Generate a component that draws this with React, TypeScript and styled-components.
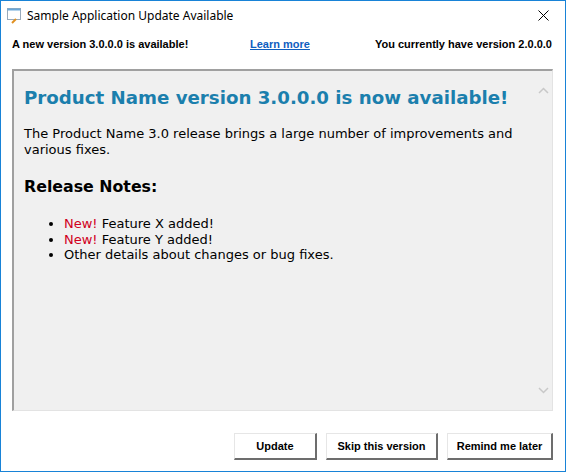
import React from "react";
import styled, { createGlobalStyle } from "styled-components";

const Global = createGlobalStyle`
  html, body { margin: 0; padding: 0; background: #fff; }
  body { font-family: "Liberation Sans", Arial, sans-serif; }
`;

const Window = styled.div`
  width: 566px; height: 472px; box-sizing: border-box;
  border: 1px solid #1883d7; background: #fff;
  display: flex; flex-direction: column;
`;
const TitleBar = styled.div`
  height: 29px; display: flex; align-items: center; padding: 0 0 0 6px;
  font-family: "Segoe UI", "Noto Sans", sans-serif; font-size: 12px; color: #000;
`;
const TitleText = styled.span` flex: 1; margin-left: 4px; `;
const Close = styled.div`
  width: 44px; height: 29px; display: flex; align-items: center; justify-content: center;
`;
const InfoRow = styled.div`
  display: flex; align-items: center;
  padding: 6px 13px 0 11px; height: 16px;
  font-size: 11px; font-weight: bold;
`;
const InfoLeft = styled.span` width: 238px; `;
const InfoRight = styled.span` margin-left: auto; `;
const Link = styled.span`
  color: #0f5ebf; text-decoration: underline;
`;
const Panel = styled.div`
  margin: 17px 12px 0 11px; height: 342px; box-sizing: border-box;
  background: #f0f0f0;
  border-top: 2px solid #a0a0a0; border-left: 2px solid #a0a0a0;
  border-right: 1px solid #e3e3e3; border-bottom: 1px solid #e3e3e3;
  display: flex;
`;
const Content = styled.div`
  flex: 1; padding: 15px 0 0 10px;
  font-family: Verdana, "DejaVu Sans", sans-serif; font-size: 13px; line-height: 16px;
`;
const H1 = styled.div`
  color: #1b7fad; font-weight: bold; font-size: 18.2px; line-height: 24px; margin: 0 0 16px;
`;
const H2 = styled.div`
  font-weight: bold; font-size: 15.8px; line-height: 22px; margin: 18px 0 18px;
`;
const List = styled.ul` margin: 0; padding-left: 40px; line-height: 15.5px; `;
const New = styled.span` color: #d00020; `;
const Scroll = styled.div`
  width: 17px; background: #f0f0f0; display: flex; flex-direction: column;
  justify-content: space-between; align-items: center; padding: 16px 0 16px;
`;
const Buttons = styled.div`
  display: flex; justify-content: flex-end; gap: 9px; padding: 22px 12px 0 0;
`;
const Button = styled.button<{ w: number }>`
  width: ${p => p.w}px; height: 27px; background: #fff;
  font-family: "Liberation Sans", Arial, sans-serif; font-size: 11px; font-weight: bold;
  color: #000; padding: 0;
  border-top: 1px solid #e6e6e6; border-left: 1px solid #e6e6e6;
  border-right: 2px solid #6d6d6d; border-bottom: 2px solid #6d6d6d;
`;

const Chevron = ({ up }: { up?: boolean }) => (
  <svg width="11" height="7" viewBox="0 0 11 7">
    <path d={up ? "M1 6L5.5 1.5L10 6" : "M1 1L5.5 5.5L10 1"} stroke="#c8c8c8" strokeWidth="1.5" fill="none" />
  </svg>
);

export default function App() {
  return (
    <>
      <Global />
      <Window>
        <TitleBar>
          <svg width="16" height="16" viewBox="0 0 16 16">
            <rect x="0.5" y="0.5" width="13" height="11" fill="#fff" stroke="#9ab" />
            <rect x="0.5" y="0.5" width="13" height="2" fill="#6aa7d8" />
            <path d="M5 15L9 11" stroke="#e09020" strokeWidth="2" />
          </svg>
          <TitleText>Sample Application Update Available</TitleText>
          <Close>
            <svg width="11" height="11" viewBox="0 0 11 11">
              <path d="M0.5 0.5L10.5 10.5M10.5 0.5L0.5 10.5" stroke="#000" strokeWidth="1" />
            </svg>
          </Close>
        </TitleBar>
        <InfoRow>
          <InfoLeft>A new version 3.0.0.0 is available!</InfoLeft>
          <Link>Learn more</Link>
          <InfoRight>You currently have version 2.0.0.0</InfoRight>
        </InfoRow>
        <Panel>
          <Content>
            <H1>Product Name version 3.0.0.0 is now available!</H1>
            <div>The Product Name 3.0 release brings a large number of improvements and various fixes.</div>
            <H2>Release Notes:</H2>
            <List>
              <li><New>New!</New> Feature X added!</li>
              <li><New>New!</New> Feature Y added!</li>
              <li>Other details about changes or bug fixes.</li>
            </List>
          </Content>
          <Scroll>
            <Chevron up />
            <Chevron />
          </Scroll>
        </Panel>
        <Buttons>
          <Button w={83}>Update</Button>
          <Button w={112}>Skip this version</Button>
          <Button w={106}>Remind me later</Button>
        </Buttons>
      </Window>
    </>
  );
}
